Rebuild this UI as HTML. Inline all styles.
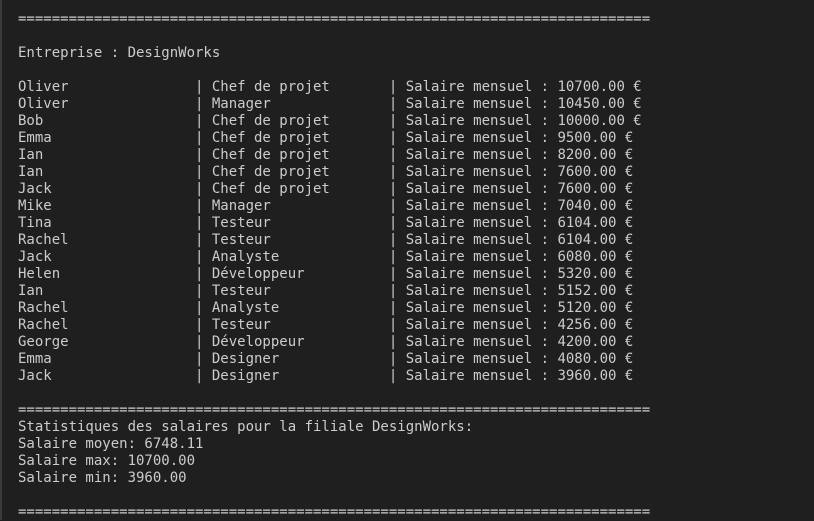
<!DOCTYPE html>
<html><head><meta charset="utf-8"><style>
html,body{margin:0;padding:0;width:814px;height:520px;overflow:hidden;background:#1f1f1f;}
.t{position:absolute;left:0;top:0;width:812px;height:520px;border-left:2px solid #3a3a3a;background:#1f1f1f;}
pre{margin:0;position:absolute;left:16px;top:11px;font-family:"DejaVu Sans Mono","Liberation Mono",monospace;font-size:14px;line-height:17px;color:#cccccc;}
</style></head><body><div class="t"><pre>===========================================================================

Entreprise : DesignWorks

Oliver               | Chef de projet       | Salaire mensuel : 10700.00 €
Oliver               | Manager              | Salaire mensuel : 10450.00 €
Bob                  | Chef de projet       | Salaire mensuel : 10000.00 €
Emma                 | Chef de projet       | Salaire mensuel : 9500.00 €
Ian                  | Chef de projet       | Salaire mensuel : 8200.00 €
Ian                  | Chef de projet       | Salaire mensuel : 7600.00 €
Jack                 | Chef de projet       | Salaire mensuel : 7600.00 €
Mike                 | Manager              | Salaire mensuel : 7040.00 €
Tina                 | Testeur              | Salaire mensuel : 6104.00 €
Rachel               | Testeur              | Salaire mensuel : 6104.00 €
Jack                 | Analyste             | Salaire mensuel : 6080.00 €
Helen                | Développeur          | Salaire mensuel : 5320.00 €
Ian                  | Testeur              | Salaire mensuel : 5152.00 €
Rachel               | Analyste             | Salaire mensuel : 5120.00 €
Rachel               | Testeur              | Salaire mensuel : 4256.00 €
George               | Développeur          | Salaire mensuel : 4200.00 €
Emma                 | Designer             | Salaire mensuel : 4080.00 €
Jack                 | Designer             | Salaire mensuel : 3960.00 €

===========================================================================
Statistiques des salaires pour la filiale DesignWorks:
Salaire moyen: 6748.11
Salaire max: 10700.00
Salaire min: 3960.00

===========================================================================</pre></div></body></html>
